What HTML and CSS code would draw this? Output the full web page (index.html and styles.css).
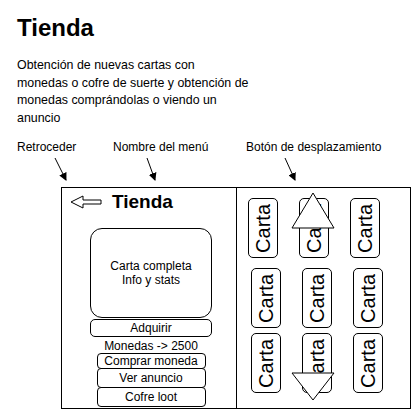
FILE: index.html
```html
<!DOCTYPE html>
<html lang="es">

<head>
    <meta charset="utf-8">
    <meta name="viewport" content="width=device-width, initial-scale=1.0">
    <title>Tienda</title>
    <link rel="stylesheet" href="styles.css">
</head>

<body>

    <h1 class="titulo">Tienda</h1>

    <p class="descripcion">Obtención de nuevas cartas con<br>monedas o cofre de suerte y obtención de<br>monedas comprándolas o viendo un<br>anuncio</p>

    <div class="etiquetas">
        <span class="etiqueta uno">Retroceder</span>
        <span class="etiqueta dos">Nombre del menú</span>
        <span class="etiqueta">Botón de desplazamiento</span>
    </div>

    <svg class="flechas" width="411" height="33" viewBox="0 0 411 33">
        <defs>
            <marker id="punta" markerWidth="8" markerHeight="8" refX="7" refY="4" orient="auto" markerUnits="userSpaceOnUse">
                <path d="M0,0 L8,4 L0,8 z" fill="#000"></path>
            </marker>
        </defs>
        <line x1="55" y1="4" x2="66" y2="26" stroke="#000" stroke-width="1" marker-end="url(#punta)"></line>
        <line x1="147" y1="4" x2="155" y2="26" stroke="#000" stroke-width="1" marker-end="url(#punta)"></line>
        <line x1="285" y1="4" x2="295" y2="26" stroke="#000" stroke-width="1" marker-end="url(#punta)"></line>
    </svg>

    <div class="maqueta">

        <section class="panel">
            <div class="cabecera">
                <svg class="volver" width="32" height="14" viewBox="0 0 32 14">
                    <polygon points="1,7 13,1 13,5 31,5 31,9 13,9 13,13" fill="#fff" stroke="#000" stroke-width="1"></polygon>
                </svg>
                <h2>Tienda</h2>
            </div>

            <div class="columna">
                <div class="carta-grande">
                    <p>Carta completa<br>Info y stats</p>
                </div>
                <button class="boton ancho">Adquirir</button>
                <p class="monedas">Monedas -&gt; 2500</p>
                <button class="boton estrecho comprar">Comprar moneda</button>
                <button class="boton estrecho">Ver anuncio</button>
                <button class="boton estrecho">Cofre loot</button>
            </div>
        </section>

        <section class="cartas">
            <div class="fila primera">
                <div class="carta"><span>Carta</span></div>
                <div class="carta"><span>Carta</span></div>
                <div class="carta"><span>Carta</span></div>
            </div>
            <div class="fila segunda">
                <div class="carta"><span>Carta</span></div>
                <div class="carta"><span>Carta</span></div>
                <div class="carta"><span>Carta</span></div>
            </div>
            <div class="fila tercera">
                <div class="carta"><span>Carta</span></div>
                <div class="carta"><span>Carta</span></div>
                <div class="carta"><span>Carta</span></div>
            </div>

            <svg class="desplazar" width="173" height="220" viewBox="0 0 173 220">
                <polygon points="76,5 55,40 97,40" fill="#fff" stroke="#000" stroke-width="1"></polygon>
                <polygon points="76,212 55,185 97,185" fill="#fff" stroke="#000" stroke-width="1"></polygon>
            </svg>
        </section>

    </div>

</body>

</html>
```

FILE: styles.css
```css
        * {
            box-sizing: border-box;
        }

        body {
            margin: 0;
            background-color: white;
            color: #000;
            font-family: "Liberation Sans", Arial, sans-serif;
        }

        .titulo {
            margin: 14px 0 0 17px;
            font-size: 24px;
            line-height: 28px;
            font-weight: bold;
        }

        .descripcion {
            margin: 15px 0 0 17px;
            font-size: 12.4px;
            line-height: 17.5px;
        }

        .etiquetas {
            display: flex;
            margin-top: 13px;
            padding-left: 17px;
            font-size: 12px;
            line-height: 14px;
        }

        .etiqueta.uno {
            width: 96px;
        }

        .etiqueta.dos {
            width: 133px;
        }

        .flechas {
            display: block;
        }

        /* la maqueta de la pantalla */
        .maqueta {
            display: grid;
            grid-template-columns: 175px 1fr;
            margin-left: 61px;
            width: 350px;
            height: 222px;
            border: 1px solid #000;
        }

        .panel {
            border-right: 1px solid #000;
            padding-top: 3px;
        }

        .cabecera {
            display: flex;
            align-items: center;
            height: 22px;
            padding-left: 8px;
        }

        .cabecera h2 {
            margin: 0 0 0 10px;
            font-size: 19px;
            line-height: 22px;
            font-weight: bold;
        }

        .volver {
            display: block;
        }

        .columna {
            display: flex;
            flex-direction: column;
            align-items: center;
            width: 122px;
            margin: 15px 0 0 28px;
        }

        .carta-grande {
            display: flex;
            align-items: center;
            justify-content: center;
            width: 122px;
            height: 90px;
            border: 1px solid #000;
            border-radius: 12px;
        }

        .carta-grande p {
            margin: 0;
            font-size: 12px;
            line-height: 14px;
            text-align: center;
        }

        .boton {
            display: flex;
            align-items: center;
            justify-content: center;
            padding: 0;
            background-color: white;
            border: 1px solid #000;
            border-radius: 5px;
            font-family: "Liberation Sans", Arial, sans-serif;
            font-size: 12px;
            color: #000;
            white-space: nowrap;
        }

        .boton.ancho {
            width: 122px;
            height: 18px;
            margin-top: 1px;
        }

        .monedas {
            margin: 3px 0 0 0;
            font-size: 12px;
            line-height: 13px;
        }

        .boton.estrecho {
            width: 109px;
            height: 20px;
            margin-top: -1px;
            border-radius: 4px;
        }

        .boton.comprar {
            height: 16px;
            margin-top: 0;
        }

        .cartas {
            position: relative;
        }

        .fila {
            display: flex;
            gap: 21px;
        }

        .fila.primera {
            margin-top: 10px;
            padding-left: 11px;
        }

        .fila.segunda {
            margin-top: 10px;
            padding-left: 14px;
        }

        .fila.tercera {
            margin-top: 5px;
            padding-left: 14px;
        }

        .carta {
            display: flex;
            align-items: center;
            justify-content: center;
            width: 30px;
            height: 60px;
            border: 1px solid #000;
            border-radius: 5px;
        }

        .carta span {
            writing-mode: vertical-rl;
            transform: rotate(180deg);
            font-size: 20px;
            line-height: 28px;
        }

        .desplazar {
            position: absolute;
            left: 0;
            top: 0;
        }
```
